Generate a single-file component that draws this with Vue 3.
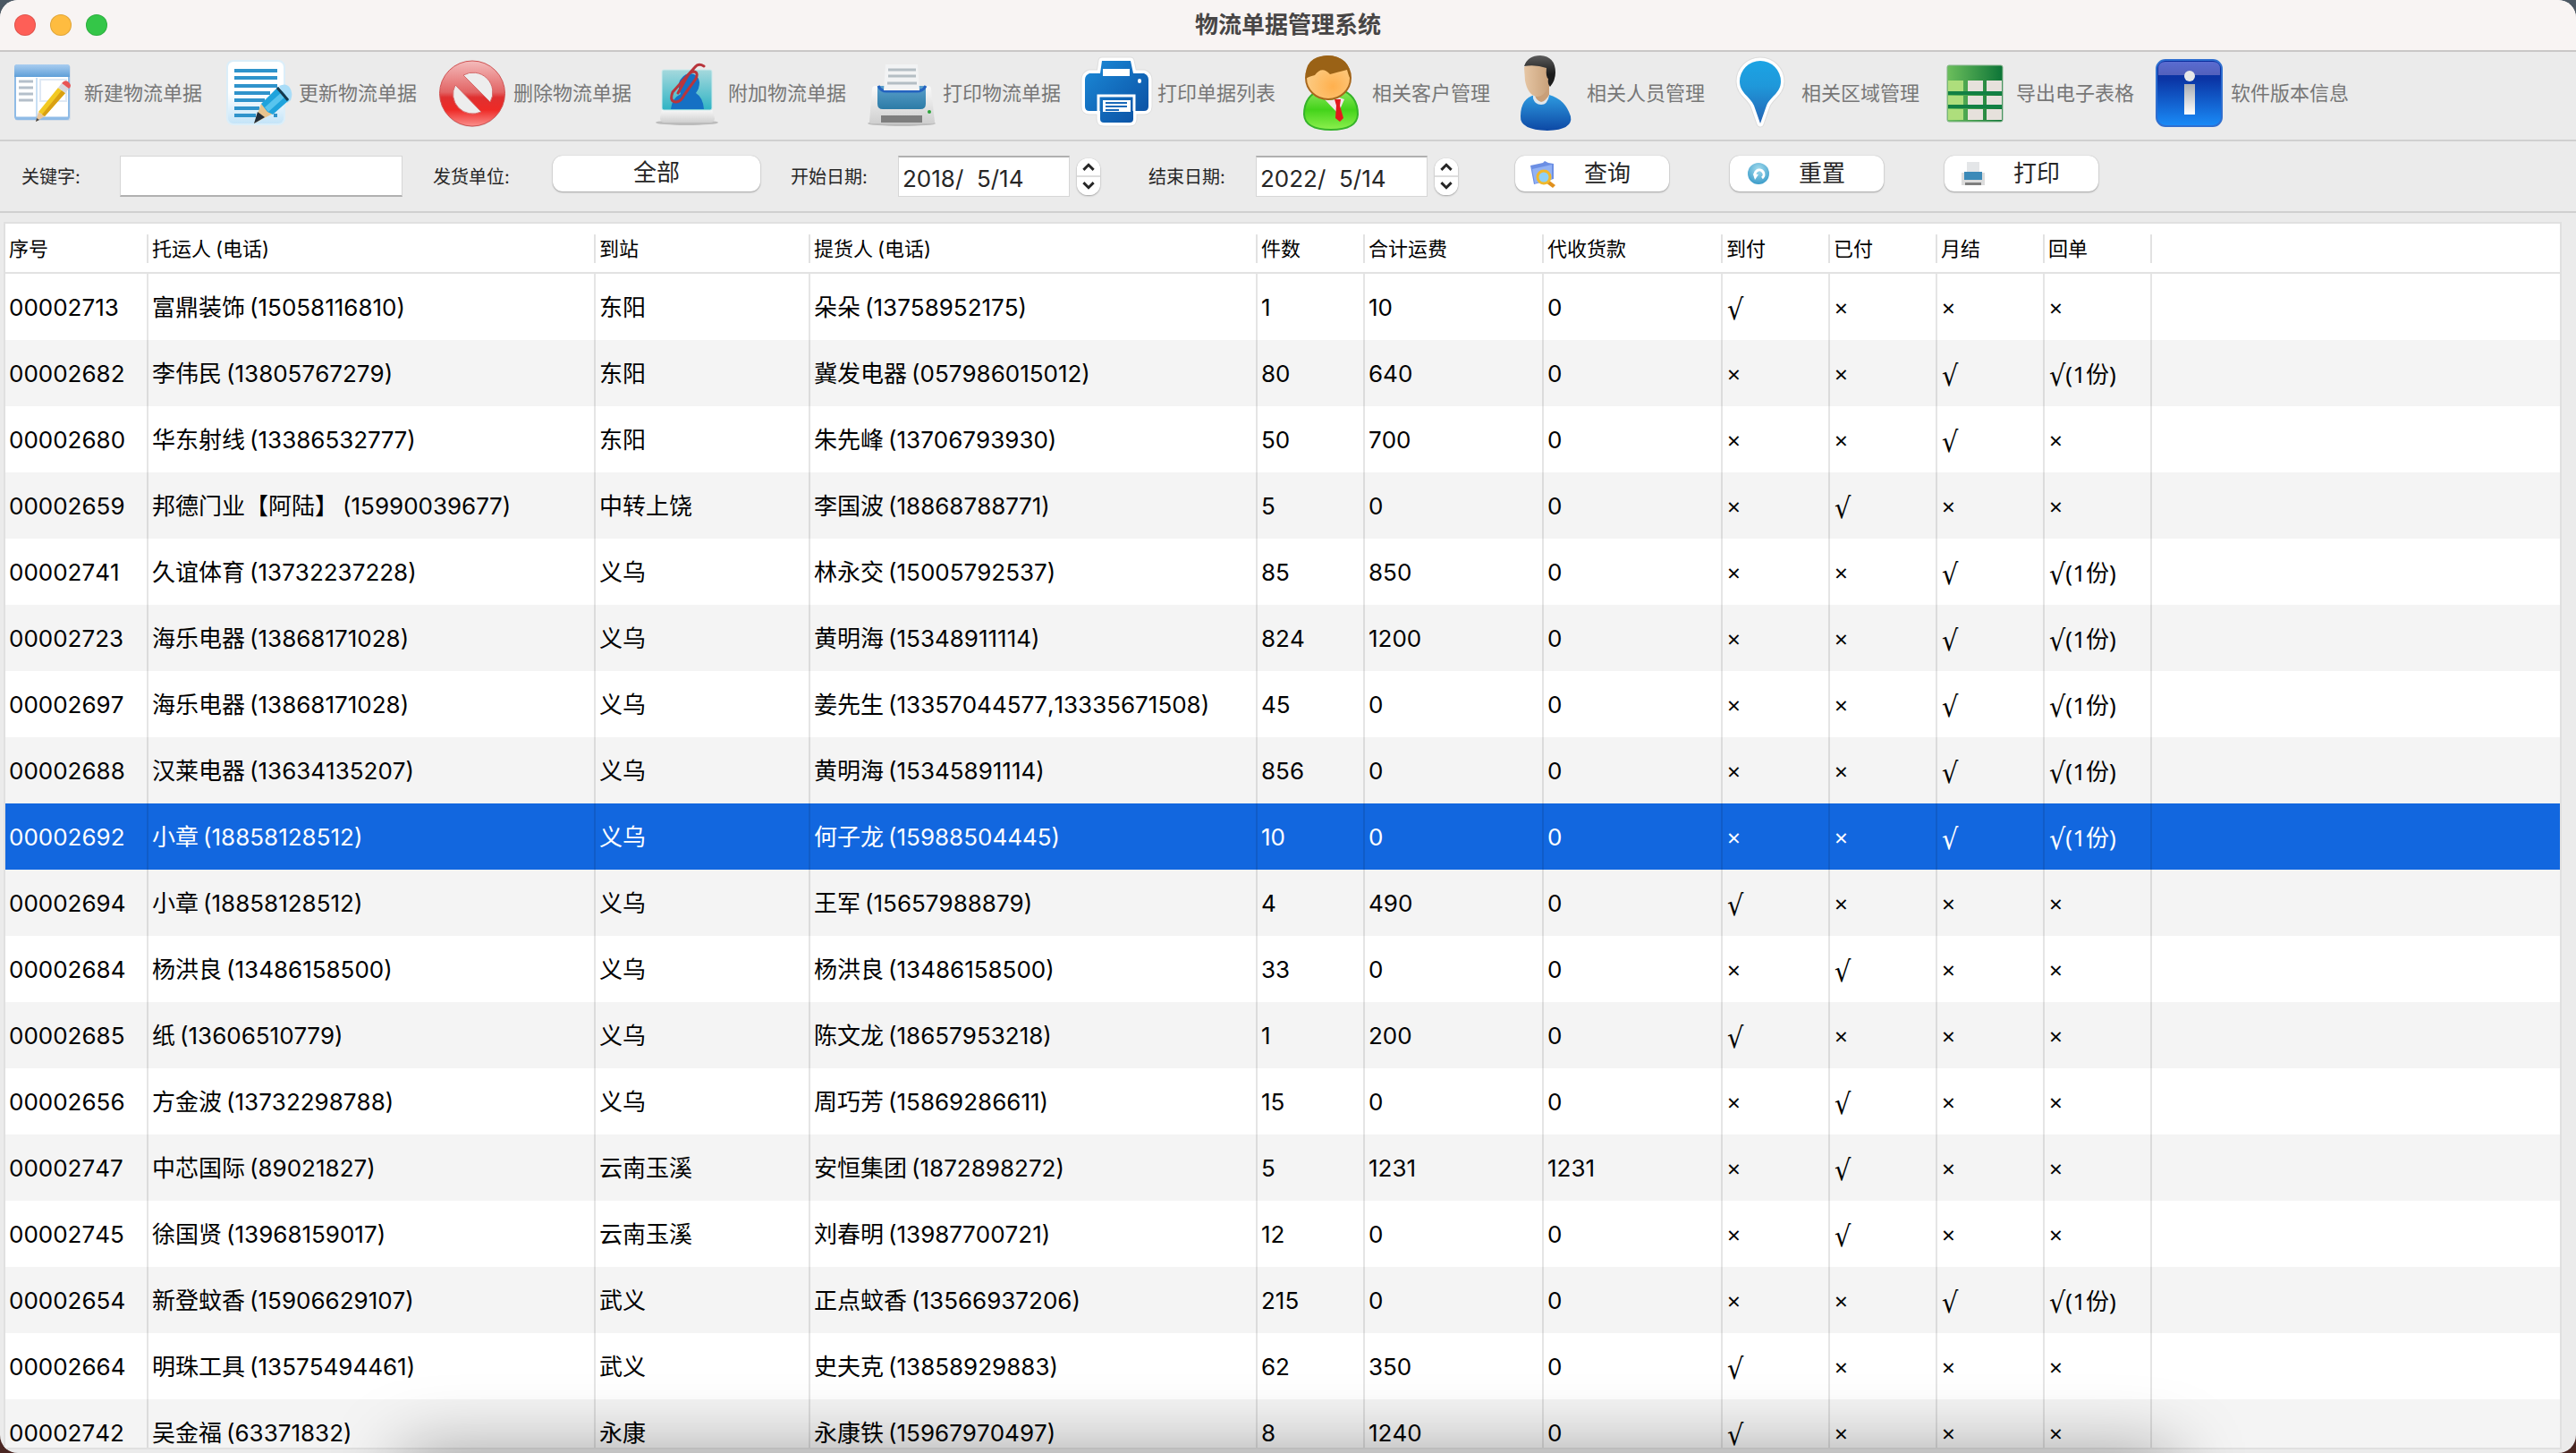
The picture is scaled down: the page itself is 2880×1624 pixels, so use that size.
<script setup>
import { ref } from 'vue'

const tools = [
  { icon: 'new', label: '新建物流单据' },
  { icon: 'edit', label: '更新物流单据' },
  { icon: 'delete', label: '删除物流单据' },
  { icon: 'attach', label: '附加物流单据' },
  { icon: 'print', label: '打印物流单据' },
  { icon: 'printList', label: '打印单据列表' },
  { icon: 'customer', label: '相关客户管理' },
  { icon: 'staff', label: '相关人员管理' },
  { icon: 'area', label: '相关区域管理' },
  { icon: 'sheet', label: '导出电子表格' },
  { icon: 'info', label: '软件版本信息' },
]

const columns = [
  { title: '序号', cls: 'c-id' },
  { title: '托运人', extra: '(电话)', cls: 'c-person' },
  { title: '到站', cls: 'c-station' },
  { title: '提货人', extra: '(电话)', cls: 'c-person' },
  { title: '件数', cls: 'c-mark' },
  { title: '合计运费', cls: 'c-money' },
  { title: '代收货款', cls: 'c-money' },
  { title: '到付', cls: 'c-mark' },
  { title: '已付', cls: 'c-mark' },
  { title: '月结', cls: 'c-mark' },
  { title: '回单', cls: 'c-mark' },
]

// pay: 0 = 到付, 1 = 已付, 2 = 月结
const rows = [
  ['00002713', '富鼎装饰', '15058116810', '东阳', '朵朵', '13758952175', '1', '10', '0', 0, false],
  ['00002682', '李伟民', '13805767279', '东阳', '冀发电器', '057986015012', '80', '640', '0', 2, true],
  ['00002680', '华东射线', '13386532777', '东阳', '朱先峰', '13706793930', '50', '700', '0', 2, false],
  ['00002659', '邦德门业【阿陆】', '15990039677', '中转上饶', '李国波', '18868788771', '5', '0', '0', 1, false],
  ['00002741', '久谊体育', '13732237228', '义乌', '林永交', '15005792537', '85', '850', '0', 2, true],
  ['00002723', '海乐电器', '13868171028', '义乌', '黄明海', '15348911114', '824', '1200', '0', 2, true],
  ['00002697', '海乐电器', '13868171028', '义乌', '姜先生', '13357044577,13335671508', '45', '0', '0', 2, true],
  ['00002688', '汉莱电器', '13634135207', '义乌', '黄明海', '15345891114', '856', '0', '0', 2, true],
  ['00002692', '小章', '18858128512', '义乌', '何子龙', '15988504445', '10', '0', '0', 2, true],
  ['00002694', '小章', '18858128512', '义乌', '王军', '15657988879', '4', '490', '0', 0, false],
  ['00002684', '杨洪良', '13486158500', '义乌', '杨洪良', '13486158500', '33', '0', '0', 1, false],
  ['00002685', '纸', '13606510779', '义乌', '陈文龙', '18657953218', '1', '200', '0', 0, false],
  ['00002656', '方金波', '13732298788', '义乌', '周巧芳', '15869286611', '15', '0', '0', 1, false],
  ['00002747', '中芯国际', '89021827', '云南玉溪', '安恒集团', '1872898272', '5', '1231', '1231', 1, false],
  ['00002745', '徐国贤', '13968159017', '云南玉溪', '刘春明', '13987700721', '12', '0', '0', 1, false],
  ['00002654', '新登蚊香', '15906629107', '武义', '正点蚊香', '13566937206', '215', '0', '0', 2, true],
  ['00002664', '明珠工具', '13575494461', '武义', '史夫克', '13858929883', '62', '350', '0', 0, false],
  ['00002742', '吴金福', '63371832', '永康', '永康铁', '15967970497', '8', '1240', '0', 0, false],
].map(([id, from, fromTel, station, to, toTel, count, freight, cod, pay, receipt]) => ({
  id, from, fromTel, station, to, toTel, count, freight, cod, pay, receipt,
}))

const selected = ref('00002692')
const keyword = ref('')
const startDate = ref('2018/  5/14')
const endDate = ref('2022/  5/14')
</script>

<template>
  <div class="window">
    <header class="titlebar">
      <div class="lights">
        <button class="light red" aria-label="关闭"></button>
        <button class="light amber" aria-label="最小化"></button>
        <button class="light green" aria-label="缩放"></button>
      </div>
      <h1>物流单据管理系统</h1>
    </header>

    <svg class="defs" width="0" height="0" aria-hidden="true">
      <defs>
        <linearGradient id="gSky" x1="0" y1="0" x2="0" y2="1"><stop offset="0" stop-color="#a9cdf0" /><stop offset="1" stop-color="#5f9fd8" /></linearGradient>
        <linearGradient id="gPaper" x1="0" y1="0" x2="0" y2="1"><stop offset=".5" stop-color="#ffffff" /><stop offset="1" stop-color="#c4e4f8" /></linearGradient>
        <linearGradient id="gRed" x1="0" y1="0" x2="0" y2="1"><stop offset="0" stop-color="#f4bcbc" /><stop offset=".48" stop-color="#e26464" /><stop offset=".56" stop-color="#df3030" /><stop offset=".75" stop-color="#ee2a26" /><stop offset="1" stop-color="#fa8f8c" /></linearGradient>
        <linearGradient id="gTeal" x1="0" y1="0" x2="0" y2="1"><stop offset="0" stop-color="#a5d9dd" /><stop offset="1" stop-color="#2fb3c4" /></linearGradient>
        <linearGradient id="gBase" x1="0" y1="0" x2="0" y2="1"><stop offset="0" stop-color="#fafafa" /><stop offset="1" stop-color="#cfcfcf" /></linearGradient>
        <linearGradient id="gTray" x1="0" y1="0" x2="0" y2="1"><stop offset="0" stop-color="#5ba0cc" /><stop offset="1" stop-color="#2c7ba6" /></linearGradient>
        <linearGradient id="gPrinter" x1="0" y1="0" x2="1" y2="1"><stop offset="0" stop-color="#1b8ad8" /><stop offset="1" stop-color="#0a4da0" /></linearGradient>
        <linearGradient id="gGreen" x1="0" y1="0" x2="0" y2="1"><stop offset="0" stop-color="#8fe860" /><stop offset=".5" stop-color="#43d31a" /><stop offset="1" stop-color="#8df04e" /></linearGradient>
        <radialGradient id="gFace" cx=".6" cy=".7" r=".7"><stop offset="0" stop-color="#ffb04e" /><stop offset="1" stop-color="#fbd08c" /></radialGradient>
        <linearGradient id="gSkin" x1="0" y1="0" x2="1" y2="0"><stop offset="0" stop-color="#e6c6a4" /><stop offset="1" stop-color="#c79f78" /></linearGradient>
        <linearGradient id="gHair" x1="0" y1="0" x2="0" y2="1"><stop offset="0" stop-color="#5c5c5c" /><stop offset=".6" stop-color="#1c1c1c" /></linearGradient>
        <linearGradient id="gShirt" x1="0" y1="0" x2="0" y2="1"><stop offset="0" stop-color="#2e9be0" /><stop offset="1" stop-color="#0d48a4" /></linearGradient>
        <linearGradient id="gPin" x1="0" y1="0" x2="0" y2="1"><stop offset="0" stop-color="#1ba4e4" /><stop offset=".4" stop-color="#1f98da" /><stop offset="1" stop-color="#2464b4" /></linearGradient>
        <linearGradient id="gSheet" x1="0" y1="0" x2="1" y2="0"><stop offset="0" stop-color="#6cbf5c" /><stop offset="1" stop-color="#0c7437" /></linearGradient>
        <linearGradient id="gInfo" x1="0" y1="0" x2="0" y2="1"><stop offset="0" stop-color="#0a2c9c" /><stop offset=".3" stop-color="#0b36a6" /><stop offset="1" stop-color="#1a8cf8" /></linearGradient>
        <linearGradient id="gGloss" x1="0" y1="0" x2="0" y2="1"><stop offset="0" stop-color="#5a6cd0" /><stop offset="1" stop-color="#5260bc" /></linearGradient>
        <linearGradient id="gSilver" x1="0" y1="0" x2="0" y2="1"><stop offset="0" stop-color="#a9adb4" /><stop offset="1" stop-color="#ffffff" /></linearGradient>
        <radialGradient id="gReset" cx=".5" cy=".3" r=".8"><stop offset="0" stop-color="#a4dcee" /><stop offset="1" stop-color="#2c93c4" /></radialGradient>
      </defs>
    </svg>

    <nav class="toolbar">
      <button v-for="t in tools" :key="t.icon" class="tool">
        <svg class="tool-icon" viewBox="0 0 84 84" aria-hidden="true">
          <g v-if="t.icon === 'new'">
            <rect x="11" y="11" width="62" height="62" rx="3" fill="#c9d6e4" opacity=".6" />
            <rect x="11" y="11" width="60" height="60" rx="3" fill="#fff" stroke="#8fbbe6" stroke-width="2" />
            <path d="M10 13a3 3 0 0 1 3-3h56a3 3 0 0 1 3 3v11H10z" fill="url(#gSky)" />
            <path d="M35 25v45" stroke="#c8dff4" stroke-width="2" />
            <path d="M11 70h60" stroke="#8fbbe6" stroke-width="3" />
            <rect x="39" y="27" width="29" height="24" fill="#fff" stroke="#dfe9f4" stroke-width="2" />
            <path d="M15 29h16M15 36h16M15 43h16M15 50h16" stroke="#b4bfca" stroke-width="3" />
            <path d="M34 74l3-11 7 5z" fill="#e9c79c" />
            <path d="M34 74l1-4 3 2z" fill="#444" />
            <path d="M37 63l22-27 8 6-23 26z" fill="#f2c922" />
            <path d="M41 66l22-27 4 3-23 26z" fill="#d9a012" />
            <path d="M59 36l4-5 8 6-4 5z" fill="#d8d8dc" />
            <path d="M63 31q4-5 8-1t0 7z" fill="#e85555" />
          </g>
          <g v-else-if="t.icon === 'edit'">
            <rect x="7" y="5" width="66" height="73" rx="8" fill="#d7effc" opacity=".8" />
            <rect x="9" y="7" width="62" height="69" rx="6" fill="url(#gPaper)" />
            <path d="M16 17h48M16 25h48M16 34h48M16 42h40M16 50h34M16 59h28M16 67h24M60 67h4" stroke="#2f93cb" stroke-width="4" />
            <path d="M66 34q8-4 12 2t1 14l-4 3z" fill="#a9ddf8" />
            <path d="M38 76l8-22 13 11z" fill="#e8c48e" />
            <path d="M38 76l4-13 8 6z" fill="#222c36" />
            <path d="M46 54l19-19 12 15-18 16-6-3z" fill="#1fa3dc" />
            <path d="M50 58l20-18 4 5-20 18z" fill="#58c4ee" />
            <path d="M64 36l12 14" stroke="#16384c" stroke-width="3" />
          </g>
          <g v-else-if="t.icon === 'delete'">
            <ellipse cx="42" cy="44" rx="36" ry="36" fill="#b9a9a9" opacity=".5" />
            <path d="M42 6a36 36 0 1 1 0 73a36 36 0 1 1 0-73z" fill="url(#gRed)" stroke="#cf5252" />
            <path d="M32 22L62 52A22 22 0 0 0 32 22zM23 33A22 22 0 0 0 52 63z" fill="#ededed" stroke="#d46a6a" />
          </g>
          <g v-else-if="t.icon === 'attach'">
            <ellipse cx="42" cy="75" rx="35" ry="3" fill="#bcbcbc" />
            <path d="M14 60h56l3 10q0 5-5 5H17q-5 0-5-5z" fill="url(#gBase)" />
            <rect x="14" y="16" width="56" height="45" rx="2" fill="url(#gTeal)" stroke="#cfeaec" />
            <path d="M24 60q1-12 11-17-4-8-1-15 5-8 12-8 9 1 10 10 0 7-4 12 8 5 9 18z" fill="#1570c4" />
            <path d="M61 12q-6-4-10 1L26 41q-4 11 4 11 6-1 9-8l13-18q3-7-2-8-5 0-8 6L32 42" fill="none" stroke="#b8353c" stroke-width="3" stroke-linecap="round" />
          </g>
          <g v-else-if="t.icon === 'print'">
            <ellipse cx="42" cy="76" rx="38" ry="3" fill="#bdbdbd" />
            <path d="M9 38q0-4 4-4h58q4 0 4 4l4 36q0 2-3 2H9q-3 0-3-2z" fill="url(#gBase)" />
            <path d="M15 34h54v20q0 6-6 6H21q-6 0-6-6z" fill="url(#gTray)" />
            <path d="M16 34q3 6 9 6h34q7 0 10-6" fill="none" stroke="#2463c0" stroke-width="3" />
            <path d="M24 10h36l2 29H22z" fill="#f2f3f4" />
            <path d="M27 16h31M27 23h31M26 31h33" stroke="#b4bec4" stroke-width="3" />
            <rect x="19" y="67" width="46" height="8" fill="#7e7e7e" />
            <circle cx="73" cy="63" r="2" fill="#2ba43a" />
          </g>
          <g v-else-if="t.icon === 'printList'">
            <g fill="#fff" stroke="#dedede" stroke-width="9" stroke-linejoin="round">
              <path d="M26 6h32l3 14h12q5 2 5 7v30q0 5-5 5H61v9q0 4-4 4H28q-4 0-4-4v-9H12q-5 0-5-5V27q0-5 5-7h12z" />
            </g>
            <g fill="url(#gPrinter)" stroke="#fff" stroke-width="7" stroke-linejoin="round">
              <path d="M26 6h32l3 14h12q5 2 5 7v30q0 5-5 5H61v9q0 4-4 4H28q-4 0-4-4v-9H12q-5 0-5-5V27q0-5 5-7h12z" />
            </g>
            <path d="M26 6h32l3 14h12q5 2 5 7v30q0 5-5 5H61v9q0 4-4 4H28q-4 0-4-4v-9H12q-5 0-5-5V27q0-5 5-7h12z" fill="url(#gPrinter)" />
            <path d="M27 15h30v8H27z" fill="#fff" />
            <rect x="66" y="26" width="4" height="5" rx="2" fill="#fff" />
            <path d="M22 62V45h40v17" fill="none" stroke="#fff" stroke-width="3" />
            <path d="M27 50h31v13H27z" fill="#fff" />
            <path d="M30 53h24M30 57h24M30 61h15" stroke="#1a69b8" stroke-width="2" />
          </g>
          <g v-else-if="t.icon === 'customer'">
            <path d="M12 66q0-22 20-28h20q20 6 20 28-1 17-30 17T12 66z" fill="url(#gGreen)" stroke="#35b32a" stroke-width="2" />
            <path d="M33 47q8 6 18 0l6 2-7 16z" fill="#f4e6ea" />
            <path d="M46 49h7l-1 7 4 14-4 4-5-4 1-14z" fill="#e3181c" />
            <ellipse cx="39" cy="25" rx="25" ry="24" fill="url(#gFace)" stroke="#a8671c" stroke-width="2" />
            <path d="M14 26Q12 1 38 0q26 1 26 25-1 2-4-9-12 3-19 5-9-10-17 1-8 2-10 4z" fill="#9a6216" />
          </g>
          <g v-else-if="t.icon === 'staff'">
            <path d="M14 68q0-20 16-24l16 0q18 5 24 24 3 15-26 16-31-1-30-16z" fill="url(#gShirt)" />
            <path d="M28 41h18v4q-2 10-9 10t-9-7z" fill="#dfe6ec" />
            <path d="M30 38l16-8v14q-4 7-9 8-6-2-7-8z" fill="#c99f78" />
            <path d="M18 13q14-9 27-1l2 18q-5 16-15 16-10-2-13-18z" fill="url(#gSkin)" />
            <path d="M18 12Q22 0 36 0q17 1 17 19 0 9-6 16-3-3-2-9-3-2-2-12-12-4-25-2z" fill="url(#gHair)" />
          </g>
          <g v-else-if="t.icon === 'area'">
            <path d="M42 6a23 23 0 0 1 23 23c0 13-12 17-16 27l-7 20-7-20C31 46 19 42 19 29A23 23 0 0 1 42 6z" fill="#fff" stroke="#dcdcdc" stroke-width="9" stroke-linejoin="round" />
            <path d="M42 6a23 23 0 0 1 23 23c0 13-12 17-16 27l-7 20-7-20C31 46 19 42 19 29A23 23 0 0 1 42 6z" fill="url(#gPin)" stroke="#fff" stroke-width="7" stroke-linejoin="round" />
            <path d="M42 6a23 23 0 0 1 23 23c0 13-12 17-16 27l-7 20-7-20C31 46 19 42 19 29A23 23 0 0 1 42 6z" fill="url(#gPin)" />
          </g>
          <g v-else-if="t.icon === 'sheet'">
            <rect x="11" y="11" width="62" height="63" rx="2" fill="url(#gSheet)" stroke="#86b48c" />
            <path d="M12 28h17v12H12zM12 45h17v10H12zM12 60h17v12H12z" fill="#aede7c" />
            <path d="M34 28h17v12H34zM55 28h17v12H55zM34 45h17v10H34zM55 45h17v10H55zM34 60h17v12H34zM55 60h17v12H55z" fill="#e6e1dc" />
            <path d="M12 42h60M12 57h60" stroke="#128044" stroke-width="4" />
          </g>
          <g v-else>
            <rect x="5" y="5" width="73" height="74" rx="10" fill="url(#gInfo)" stroke="#2f6fd0" stroke-width="2" />
            <path d="M7 22V15q0-8 8-8h53q8 0 8 8v7z" fill="url(#gGloss)" />
            <ellipse cx="42" cy="23" rx="6" ry="6" fill="#e8e8e8" />
            <rect x="36" y="32" width="12" height="34" fill="url(#gSilver)" />
          </g>
        </svg>
        <span>{{ t.label }}</span>
      </button>
    </nav>

    <form class="filters" @submit.prevent>
      <label class="lbl-key" for="kw">关键字:</label>
      <input id="kw" v-model="keyword" class="field keyword" type="text" />
      <label class="lbl-unit" for="unit">发货单位:</label>
      <select id="unit" class="pill unit"><option>全部</option></select>
      <label class="lbl-date first" for="start">开始日期:</label>
      <input id="start" v-model="startDate" class="field date" type="text" />
      <div class="stepper">
        <button type="button" aria-label="开始日期增加"><svg viewBox="0 0 14 8"><path d="M2 7l5-5 5 5" /></svg></button>
        <button type="button" aria-label="开始日期减少"><svg viewBox="0 0 14 8"><path d="M2 1l5 5 5-5" /></svg></button>
      </div>
      <label class="lbl-date" for="end">结束日期:</label>
      <input id="end" v-model="endDate" class="field date" type="text" />
      <div class="stepper">
        <button type="button" aria-label="结束日期增加"><svg viewBox="0 0 14 8"><path d="M2 7l5-5 5 5" /></svg></button>
        <button type="button" aria-label="结束日期减少"><svg viewBox="0 0 14 8"><path d="M2 1l5 5 5-5" /></svg></button>
      </div>
      <div class="actions">
        <button type="submit" class="pill action">
          <svg viewBox="0 0 32 32" aria-hidden="true">
            <path d="M2 7l14-3 2-2 4 2 6 1v17L6 28z" fill="#6c8fe4" />
            <path d="M4 11l22-5v16L7 27z" fill="#92b2f4" />
            <path d="M22 23l8 6-3 3-8-6z" fill="#e0901c" />
            <circle cx="17" cy="20" r="7" fill="#8fd0f4" stroke="#f0b82a" stroke-width="3" />
          </svg>
          <span>查询</span>
        </button>
        <button type="reset" class="pill action">
          <svg viewBox="0 0 32 32" aria-hidden="true">
            <circle cx="17" cy="16" r="12" fill="url(#gReset)" />
            <path d="M14 20a5 5 0 1 1 7 1" fill="none" stroke="#fff" stroke-width="3" />
            <path d="M11 16l6 1-4 6z" fill="#fff" />
          </svg>
          <span>重置</span>
        </button>
        <button type="button" class="pill action">
          <svg viewBox="0 0 32 32" aria-hidden="true">
            <path d="M4 15h26v14H4z" fill="#dcdcdc" />
            <path d="M10 3h14v12H10z" fill="#e4e6e8" />
            <path d="M7 14h20v9H7z" fill="#3c8ab8" />
            <path d="M8 26h18v3H8z" fill="#7e7e7e" />
          </svg>
          <span>打印</span>
        </button>
      </div>
    </form>

    <main class="content">
      <div class="table-box">
        <table>
          <colgroup>
            <col v-for="c in columns" :key="c.title" :class="c.cls" />
            <col />
          </colgroup>
          <thead>
            <tr>
              <th v-for="c in columns" :key="c.title" scope="col">{{ c.title }}<span v-if="c.extra" class="tel">{{ c.extra }}</span></th>
              <td></td>
            </tr>
          </thead>
          <tbody>
            <tr v-for="r in rows" :key="r.id" :class="{ selected: r.id === selected }" @click="selected = r.id">
              <td>{{ r.id }}</td>
              <td>{{ r.from }}<span class="tel">({{ r.fromTel }})</span></td>
              <td>{{ r.station }}</td>
              <td>{{ r.to }}<span class="tel">({{ r.toTel }})</span></td>
              <td>{{ r.count }}</td>
              <td>{{ r.freight }}</td>
              <td>{{ r.cod }}</td>
              <td v-for="p in 3" :key="p" class="mark"><span v-if="r.pay === p - 1" class="check">√</span><template v-else>×</template></td>
              <td class="mark"><template v-if="r.receipt"><span class="check">√</span>(1份)</template><template v-else>×</template></td>
              <td></td>
            </tr>
          </tbody>
        </table>
      </div>
    </main>
    <div class="dock-shadow"></div>
  </div>
</template>

<style>
body {
  background: linear-gradient(#4c5863, #4a2622);
}
</style>

<style scoped>
.window {
  position: relative;
  display: flex;
  flex-direction: column;
  height: 100vh;
  overflow: hidden;
  border-radius: 20px;
  background: #ebebeb;
  color: #000;
  font-family: Inter, "Noto Sans CJK SC", sans-serif;
  font-size: 26px;
  font-kerning: none;
}
button,
input,
select {
  margin: 0;
  padding: 0;
  border: 0;
  font: inherit;
  font-kerning: inherit;
  color: inherit;
  appearance: none;
}
.defs {
  position: absolute;
}
.titlebar {
  flex: none;
  display: grid;
  grid-template-columns: 1fr auto 1fr;
  align-items: center;
  box-sizing: border-box;
  height: 58px;
  border-bottom: 2px solid #c9c7c7;
  background: #f8f4f3;
}
.titlebar h1 {
  margin: 0;
  font-size: 26px;
  line-height: 36px;
  font-weight: 700;
  color: #474545;
}
.lights {
  display: flex;
  gap: 16px;
  padding-left: 16px;
}
.light {
  width: 24px;
  height: 24px;
  border-radius: 50%;
  box-shadow: inset 0 0 0 1px rgba(0, 0, 0, 0.12);
}
.red { background: #fe5f57; }
.amber { background: #febc40; }
.green { background: #34c648; }

.toolbar {
  flex: none;
  display: flex;
  height: 98px;
  border-bottom: 2px solid #d0d0d0;
}
.tool {
  flex: none;
  display: flex;
  align-items: center;
  gap: 4px;
  width: 240px;
  height: 92px;
  padding-left: 6px;
  background: none;
  font-size: 22px;
  color: #777;
  white-space: nowrap;
}
.tool span {
  padding-bottom: 4px;
}
.tool-icon {
  flex: none;
  width: 84px;
  height: 84px;
}

.filters {
  flex: none;
  display: flex;
  align-items: center;
  height: 78px;
  border-bottom: 2px solid #d0d0d0;
  color: #262626;
}
.filters label {
  flex: none;
  padding-bottom: 2px;
  font-size: 20px;
  white-space: nowrap;
  box-sizing: border-box;
}
.lbl-key { width: 134px; padding-left: 24px; }
.lbl-unit { width: 168px; padding-left: 34px; }
.lbl-date { width: 174px; padding-left: 54px; }
.lbl-date.first { width: 154px; padding-left: 34px; }
.field {
  flex: none;
  box-sizing: border-box;
  height: 46px;
  background: #fff;
  border: 1px solid #d6d6d6;
}
.keyword {
  width: 316px;
  padding: 0 6px;
  border-bottom: 2px solid #b0b0b0;
}
.date {
  width: 192px;
  padding: 3px 4px 0;
  border-top: 2px solid #b0b0b0;
  white-space: pre;
}
.pill {
  flex: none;
  height: 40px;
  margin-bottom: 6px;
  border-radius: 11px;
  background: #fff;
  box-shadow: 0 1px 2px rgba(0, 0, 0, 0.3), 0 0 1px rgba(0, 0, 0, 0.25);
}
.unit {
  width: 232px;
  text-align: center;
  text-align-last: center;
  line-height: 36px;
  padding-bottom: 3px;
}
.stepper {
  flex: none;
  display: flex;
  flex-direction: column;
  width: 26px;
  height: 41px;
  margin-left: 8px;
  border-radius: 12px;
  overflow: hidden;
  background: #fff;
  box-shadow: 0 1px 2px rgba(0, 0, 0, 0.3), 0 0 1px rgba(0, 0, 0, 0.25);
}
.stepper button {
  flex: 1;
  display: flex;
  align-items: center;
  justify-content: center;
  background: #fff;
}
.stepper button + button {
  border-top: 2px solid #dedede;
}
.stepper svg {
  width: 16px;
  height: 9px;
  fill: none;
  stroke: #262626;
  stroke-width: 2.6;
}
.actions {
  display: flex;
  gap: 68px;
  margin-left: 64px;
}
.action {
  display: flex;
  align-items: center;
  width: 172px;
  padding-left: 15px;
}
.action svg {
  flex: none;
  width: 32px;
  height: 32px;
}
.action span {
  margin-left: 30px;
  padding-bottom: 5px;
}

.content {
  flex: 1;
  min-height: 0;
  display: flex;
  padding: 10px 16px 4px 4px;
}
.table-box {
  flex: 1;
  overflow: hidden;
  border: 2px solid #e0e0e0;
  background: #fff;
}
table {
  width: 100%;
  table-layout: fixed;
  border-collapse: separate;
  border-spacing: 0;
}
.c-id { width: 160px; }
.c-person { width: 500px; }
.c-station { width: 240px; }
.c-mark { width: 120px; }
.c-money { width: 200px; }
th,
td {
  box-sizing: border-box;
  padding: 2px 0 0 4px;
  text-align: left;
  white-space: nowrap;
}
thead th,
thead td {
  position: relative;
  height: 56px;
  border-bottom: 2px solid #e2e2e2;
  font-size: 22px;
  line-height: 32px;
  font-weight: 400;
}
thead th::after {
  content: "";
  position: absolute;
  right: 0;
  top: 12px;
  height: 32px;
  border-right: 2px solid #e2e2e2;
}
tbody td {
  height: 74px;
  padding-top: 2px;
  line-height: 40px;
  border-right: 2px solid rgba(0, 0, 0, 0.1);
}
tbody td:last-child {
  border-right: 0;
}
tbody tr:nth-child(even) {
  background: #f4f4f4;
}
tbody tr.selected {
  background: #1267df;
  color: #fff;
}
.tel {
  margin-left: 5px;
}
tbody .mark {
  padding-left: 5px;
  font-family: "Noto Sans", "Noto Sans CJK SC", sans-serif;
}
.check {
  font-family: "DejaVu Sans Condensed", "DejaVu Sans", sans-serif;
  font-size: 32px;
  line-height: 32px;
  vertical-align: -3px;
}
.dock-shadow {
  position: absolute;
  left: 450px;
  right: 450px;
  top: 100%;
  height: 80px;
  box-shadow: 0 0 80px rgba(0, 0, 0, 0.36);
  pointer-events: none;
}
</style>
